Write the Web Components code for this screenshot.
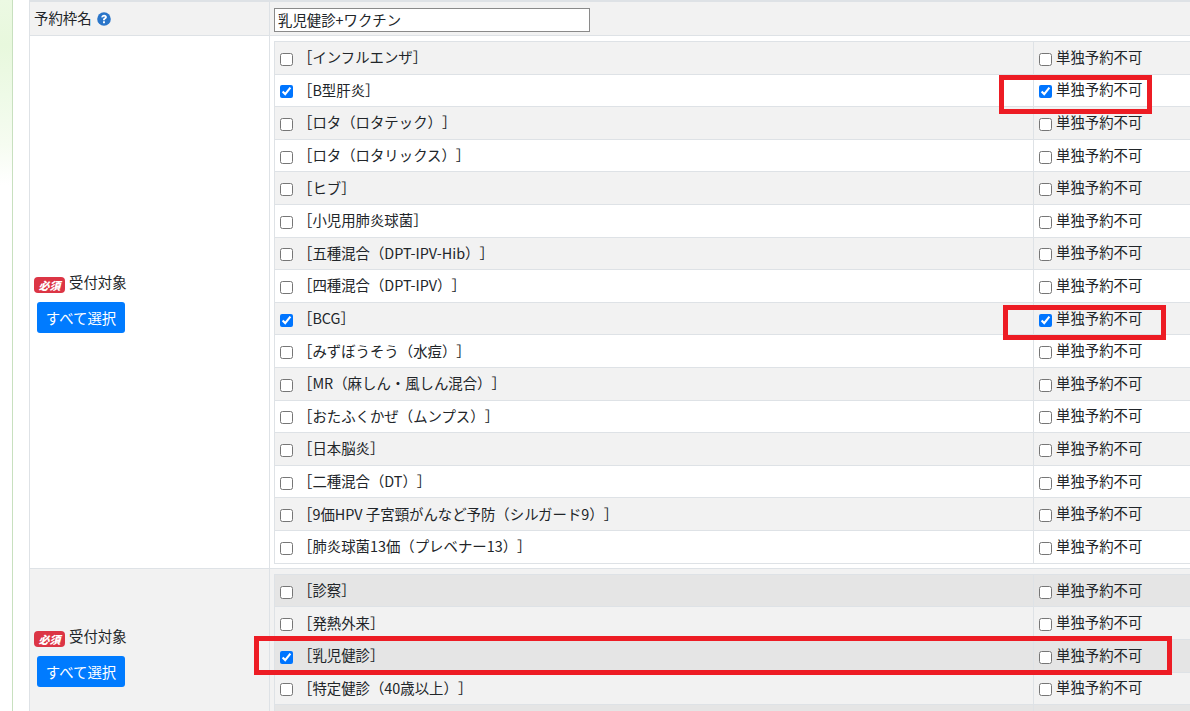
<!DOCTYPE html>
<html lang="ja"><head><meta charset="utf-8">
<style>
html,body{margin:0;height:711px;overflow:hidden;background:#fff}
body{font:14.4px/1.5 "Noto Sans CJK JP","Noto Sans",sans-serif;color:#212529;text-spacing-trim:space-all}
</style></head>
<body>
<x-page>
  <x-section kind="name">
    <span slot="label">予約枠名 <x-help></x-help></span>
    <x-name-input value="乳児健診+ワクチン"></x-name-input>
  </x-section>
  <x-section kind="target" id="s1"></x-section>
  <x-section kind="target" id="s2" alt></x-section>
  <x-mark style="left:999px;top:75px;width:153px;height:39px"></x-mark>
  <x-mark style="left:1003px;top:305px;width:163px;height:35px"></x-mark>
  <x-mark style="left:254px;top:636px;width:918px;height:39px"></x-mark>
</x-page>
<script>
class XPage extends HTMLElement{constructor(){super();this.attachShadow({mode:'open'}).innerHTML=`<style>
:host{display:block;position:relative;width:1190px;height:711px;overflow:hidden}
.wrap{display:flex;height:100%}
.strip{width:12px;background:linear-gradient(180deg,#ecf9e3 0,#e8f8dd 45px,#eefae7 95px,#f6fcf1 145px,#fff 185px);border-right:1px solid #c8e0bf;flex:none}
.gap{width:16px;flex:none}
.main{flex:1;min-width:0;border-top:2px solid #dee2e6;box-sizing:border-box}
</style><div class="wrap"><div class="strip"></div><div class="gap"></div><div class="main"><slot></slot></div></div>`}}
class XSection extends HTMLElement{constructor(){super();this.attachShadow({mode:'open'}).innerHTML=`<style>
:host{display:grid;grid-template-columns:240px 1fr;border-left:1px solid #dee2e6;border-bottom:1px solid #dee2e6;box-sizing:border-box}
:host([kind=name]){background:#f2f2f2;height:34px}
:host([alt]){background:#f2f2f2}
.l{border-right:1px solid #dee2e6;display:flex;flex-direction:column;justify-content:center;padding-left:4px;min-width:0}
:host([kind=name]) .l{padding-left:4px;padding-bottom:2px}
.r{padding:5px 0 4.4px 4px;min-width:0}
:host([kind=name]) .r{padding:6px 0 0 4px}
</style><div class="l"><slot name="label"></slot></div><div class="r"><slot></slot></div>`}}
class XHelp extends HTMLElement{constructor(){super();this.attachShadow({mode:'open'}).innerHTML=`<style>
:host{display:inline-block;width:14px;height:14px;vertical-align:-2px;margin-left:2px}svg{display:block}
</style><svg viewBox="0 0 14 14" width="14" height="14"><circle cx="7" cy="7" r="6.8" fill="#2a75c9"/><path d="M4.3 5.4C4.4 3.7 5.6 2.7 7.1 2.7c1.6 0 2.8 1 2.8 2.3 0 1.1-.7 1.7-1.3 2.1-.5.3-.7.5-.7 1v.2H6v-.5c0-1 .5-1.5 1.1-1.9.5-.3.8-.5.8-.9 0-.4-.4-.6-.8-.6-.6 0-.9.3-1 .9z" fill="#fff"/><rect x="6" y="9.2" width="1.95" height="1.95" rx=".3" fill="#fff"/></svg>`}}
class XNameInput extends HTMLElement{constructor(){super();this.attachShadow({mode:'open'}).innerHTML=`<style>
:host{display:block}input{display:block;box-sizing:border-box;width:316px;height:24px;padding:0 2px 2px 3px;border:1px solid #8a8a8a;border-radius:0;font:14.4px "Noto Sans CJK JP",sans-serif;color:#212529;background:#fff;outline:0}
</style><input type="text">`;}
connectedCallback(){this.shadowRoot.querySelector('input').value=this.getAttribute('value')||''}}
class XBadge extends HTMLElement{constructor(){super();this.attachShadow({mode:'open'}).innerHTML=`<style>
:host{display:inline-block;width:31px;height:16px;background:#dc3545;color:#fff;border-radius:4px;font:italic 900 11px/16px "Noto Sans CJK JP",sans-serif;text-align:center;vertical-align:-2px;margin-right:4px}
</style><slot></slot>`}}
class XButton extends HTMLElement{constructor(){super();this.attachShadow({mode:'open'}).innerHTML=`<style>
:host{display:block;width:88px;height:31px;margin:9px 0 0 3px;box-sizing:border-box;background:#007bff;color:#fff;border-radius:3px;text-align:center;font:14.4px/31px "Noto Sans CJK JP",sans-serif}
</style><slot></slot>`}}
class XTarget extends HTMLElement{constructor(){super();this.attachShadow({mode:'open'}).innerHTML=`<style>
:host{display:block;font:14.4px/20px "Noto Sans CJK JP",sans-serif;border-bottom:1px solid #dee2e6;border-left:1px solid #dee2e6}
</style><slot></slot>`}}
class XOption extends HTMLElement{constructor(){super();this.attachShadow({mode:'open'})}
connectedCallback(){
const c=this.hasAttribute('checked')?'checked':'',s=this.hasAttribute('solo')?'checked':'',blank=this.hasAttribute('blank');
this.shadowRoot.innerHTML=`<style>
:host{display:grid;grid-template-columns:759px 1fr;height:32.6px;box-sizing:border-box;border-top:1px solid #dee2e6;background:var(--row,transparent)}
div{display:flex;align-items:center;min-width:0;white-space:nowrap}
.a{padding-left:5px;border-right:1px solid #dee2e6}
.b{padding-left:5px}
input{margin:3px 0 0;width:13px;height:13px;flex:none}
.a input{margin-right:5px}.b input{margin-right:4px}
span{position:relative;top:-1px}
.a span{top:-.6px}
</style>`+(blank?`<div class="a"></div><div class="b"></div>`:`<div class="a"><input type="checkbox" ${c}><span><slot></slot></span></div><div class="b"><input type="checkbox" ${s}><span>単独予約不可</span></div>`)}}
class XMark extends HTMLElement{constructor(){super();this.attachShadow({mode:'open'}).innerHTML=`<style>
:host{display:block;position:absolute;box-sizing:border-box;border:5px solid #ed1c24;pointer-events:none}
</style>`}}
const defs={'x-page':XPage,'x-section':XSection,'x-help':XHelp,'x-name-input':XNameInput,'x-badge':XBadge,'x-button':XButton,'x-target':XTarget,'x-option':XOption,'x-mark':XMark};
for(const k in defs)customElements.define(k,defs[k]);
function fill(sec,items,odd,even){
  const l=document.createElement('div');l.slot='label';
  l.innerHTML='<div style="padding-top:1px"><x-badge>必須</x-badge>受付対象</div><x-button>すべて選択</x-button>';
  sec.append(l);
  const t=document.createElement('x-target');
  items.forEach((it,i)=>{const o=document.createElement('x-option');o.textContent=it[0];
    if(it[1])o.setAttribute('checked','');if(it[2])o.setAttribute('solo','');
    if(!it[0])o.setAttribute('blank','');
    o.style.setProperty('--row',i%2?even:odd);
    t.append(o)});
  sec.append(t);
}
fill(document.getElementById('s1'),[['［インフルエンザ］'],['［B型肝炎］',1,1],['［ロタ（ロタテック）］'],['［ロタ（ロタリックス）］'],['［ヒブ］'],['［小児用肺炎球菌］'],['［五種混合（DPT-IPV-Hib）］'],['［四種混合（DPT-IPV）］'],['［BCG］',1,1],['［みずぼうそう（水痘）］'],['［MR（麻しん・風しん混合）］'],['［おたふくかぜ（ムンプス）］'],['［日本脳炎］'],['［二種混合（DT）］'],['［9価HPV 子宮頸がんなど予防（シルガード9）］'],['［肺炎球菌13価（プレベナー13）］']],'#f2f2f2','#fff');
fill(document.getElementById('s2'),[['［診察］'],['［発熱外来］'],['［乳児健診］',1],['［特定健診（40歳以上）］'],['']],'#e5e5e5','#f2f2f2');
</script>
</body></html>
